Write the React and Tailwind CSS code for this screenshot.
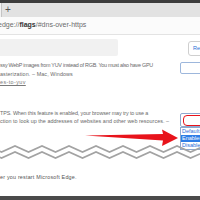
import React from 'react';

const Zigzag = () => {
  const pts = (base) => {
    const out = [];
    for (let i = -1; i < 10; i++) {
      const x0 = 15 + i * 27;
      out.push(`${x0 - 13.5},${base + 6}`);
      out.push(`${x0},${base}`);
    }
    return out.join(' ');
  };
  return (
    <svg className="absolute left-0 top-[140px]" width="200" height="26" viewBox="0 140 200 26">
      <polyline points={pts(146)} fill="none" stroke="#a3a3a3" strokeWidth="1.6" />
      <polyline points={pts(152)} fill="none" stroke="#a3a3a3" strokeWidth="1.6" />
    </svg>
  );
};

const Arrow = () => (
  <svg className="absolute left-0 top-0 pointer-events-none" width="200" height="200">
    <polygon
      points="85,135.5 163,134 162,129.5 178,138 162,146 163,140.5"
      fill="#e8131b"
    />
  </svg>
);

export default function App() {
  return (
    <div className="relative w-[200px] h-[200px] overflow-hidden bg-white font-['Liberation_Sans',Arial,sans-serif]">
      {/* window top */}
      <div className="h-[3px] bg-[#3c3c3c]" />
      <div className="h-[14px] bg-[#e2e2e2] flex items-center">
        <div className="w-[2px] h-full border-r border-[#c4c4c4] bg-[#f2f2f2]" />
        <span className="ml-[3px] text-[10px] leading-none text-[#555]">+</span>
      </div>

      {/* address bar */}
      <div className="h-[18px] bg-[#fbfbfb] border-b border-[#e3e3e3] flex items-center text-[7px] text-[#6b6b6b] whitespace-nowrap">
        <span className="-ml-[2px]">edge://<span className="font-bold text-[#333]">flags</span>/#dns-over-https</span>
      </div>

      {/* search row */}
      <div className="flex items-start mt-[4px] h-[17px]">
        <div className="shrink-0 w-[118px] h-[17px] bg-[#f1f1f1] rounded-r-[2px]" />
        <div className="shrink-0 ml-[70px] mt-[2px] h-[15px] w-[32px] border border-[#cfcfcf] rounded-[3px] flex items-center pl-[4px] text-[5.5px] text-[#2b6fd6] whitespace-nowrap">
          Reset all
        </div>
      </div>

      {/* feature 1 */}
      <div className="flex mt-[5px] text-[5.4px] leading-[8.5px] text-[#6a6a6a] whitespace-nowrap">
        <div className="shrink-0 w-[180px] overflow-hidden">
          <div className="tracking-[-0.25px]">ssy WebP images from YUV instead of RGB. You must also have GPU</div>
          <div className="tracking-[0.1px]">asterization. – Mac, Windows</div>
          <div className="tracking-[0.4px] underline text-[#7a7a7a]">es-to-yuv</div>
        </div>
        <div className="shrink-0 mt-[1px] w-[30px] h-[12px] border border-[#9db7dc] rounded-[2px] bg-white" />
      </div>

      {/* feature 2 */}
      <div className="flex mt-[22px] text-[5.4px] leading-[8.5px] text-[#6a6a6a] whitespace-nowrap">
        <div className="shrink-0 w-[180px] overflow-hidden">
          <div className="tracking-[-0.12px]">TPS. When this feature is enabled, your browser may try to use a</div>
          <div className="tracking-[0.03px]">ction to look up the addresses of websites and other web resources. –</div>
        </div>
        <div className="shrink-0 relative mt-[4px] w-[30px] h-[14px] border border-[#8fa9cf] rounded-[2px] bg-white">
          <div className="absolute left-[2px] top-[1px] w-[24px] h-[11px] border-[1.5px] border-[#e8131b] rounded-[4px]" />
          {/* open dropdown */}
          <div className="absolute -left-[1px] top-[13px] w-[30px] border border-[#8fa9cf] bg-white text-[5.5px] leading-[7px] text-[#2b6fd6]">
            <div className="pl-[1px]">Default</div>
            <div className="pl-[1px] bg-[#2e7de6] text-white">Enabled</div>
            <div className="pl-[1px]">Disabled</div>
          </div>
        </div>
      </div>

      {/* last line */}
      <div className="mt-[46px] text-[5.4px] leading-[8px] tracking-[0.2px] text-[#555] whitespace-nowrap">
        er you restart Microsoft Edge.
      </div>

      <div className="absolute left-0 bottom-0 w-full h-[4px] bg-[#4a4a4a]" />

      <Zigzag />
      <Arrow />
    </div>
  );
}
